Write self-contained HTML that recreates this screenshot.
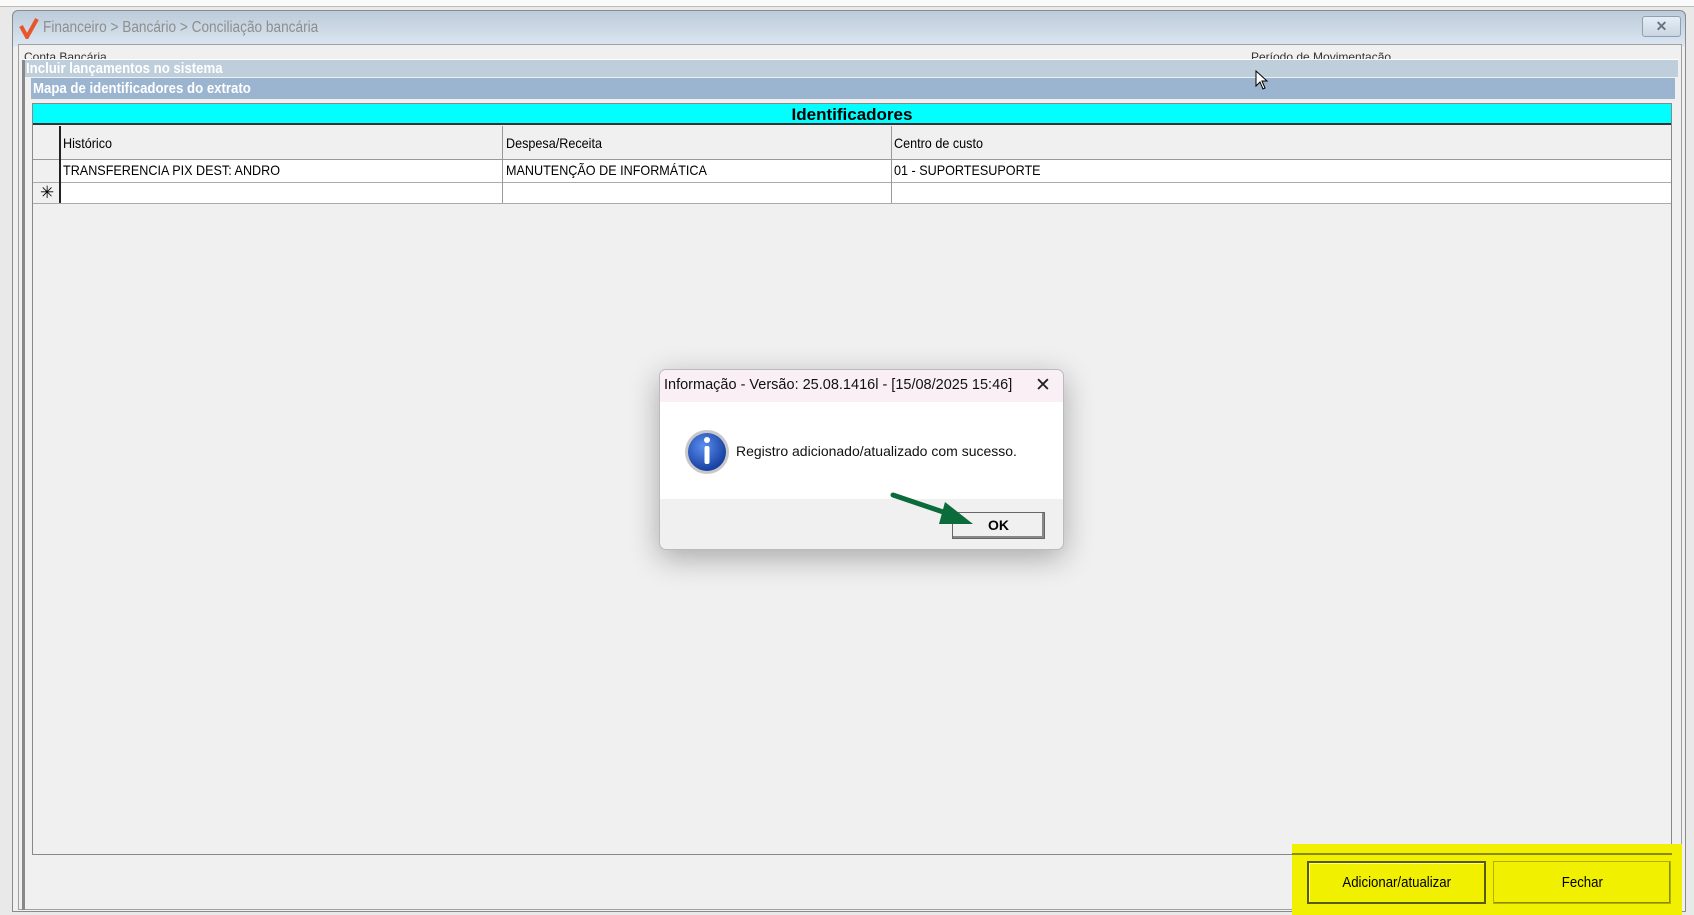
<!DOCTYPE html>
<html><head><meta charset="utf-8"><style>
*{margin:0;padding:0;box-sizing:border-box}
body{width:1694px;height:915px;background:#f0f0f0;position:relative;overflow:hidden;font-family:"Liberation Sans",sans-serif}
.a{position:absolute}
.cell{position:absolute;font-size:14px;color:#000;white-space:nowrap;transform:scaleX(.9);transform-origin:left center}
.bh{transform:scaleX(.88);transform-origin:left center;white-space:nowrap}
</style></head><body>
<div class="a" style="left:0;top:0;width:1694px;height:7px;background:#fafafa;border-bottom:1px solid #bbb"></div>
<div class="a" style="left:0;top:7px;width:1694px;height:908px;background:#e9e9e9"></div>
<div class="a" style="left:12px;top:10px;width:1674px;height:902px;background:linear-gradient(#bccbd9,#dbe6f1 35px,#f0f0f0 36px);border:1px solid #8a8a8a;border-radius:6px 6px 0 0"></div>
<svg class="a" style="left:18px;top:17px" width="22" height="22" viewBox="0 0 22 22"><path d="M3 9 L9 20 L19 2" fill="none" stroke="#e8552a" stroke-width="4"/></svg>
<div class="a" style="left:43px;top:19px;font-size:15.5px;color:#8e8e8e" class="bh"><span class="bh" style="display:inline-block">Financeiro &gt; Bancário &gt; Conciliação bancária</span></div>
<div class="a" style="left:1642px;top:16px;width:39px;height:21px;border:1px solid #8da0b4;border-radius:3px;background:linear-gradient(#e6edf5,#c9d6e3);text-align:center;font-size:14px;line-height:19px;color:#6a7480;font-weight:bold">✕</div>
<div class="a" style="left:18px;top:44px;width:1664px;height:866px;border:1px solid #a0a0a0;background:#f0f0f0"></div>
<div class="a" style="left:24px;top:50px;font-size:12px;color:#333">Conta Bancária</div>
<div class="a" style="left:1251px;top:50px;font-size:12px;color:#333">Período de Movimentação</div>
<div class="a" style="left:24px;top:59px;width:1654px;height:18px;background:#bfcedb;border-top:1px solid #fff"></div>
<div class="a bh" style="left:26px;top:60px;font-size:15px;font-weight:bold;color:#fff">Incluir lançamentos no sistema</div>
<div class="a" style="left:22px;top:60px;width:3px;height:850px;background:#888"></div>
<div class="a" style="left:31px;top:78px;width:1644px;height:21px;background:#9bb4cf"></div>
<div class="a bh" style="left:33px;top:80px;font-size:15px;font-weight:bold;color:#fff">Mapa de identificadores do extrato</div>
<div class="a" style="left:32px;top:103px;width:1640px;height:752px;border:1px solid #888;background:#f0f0f0"></div>
<div class="a" style="left:33px;top:104px;width:1638px;height:21px;background:#00ffff;border-bottom:2px solid #333;text-align:center;font-weight:bold;font-size:17px;line-height:21px">Identificadores</div>
<div class="a" style="left:33px;top:126px;width:1638px;height:34px;background:#f0f0f0;border-bottom:1px solid #999"></div>
<div class="a" style="left:60px;top:160px;width:1611px;height:43px;background:#fff"></div>
<div class="a" style="left:33px;top:182px;width:1638px;height:1px;background:#aaa"></div>
<div class="a" style="left:33px;top:203px;width:1638px;height:1px;background:#aaa"></div>
<div class="a" style="left:59px;top:126px;width:2px;height:77px;background:#222"></div>
<div class="a" style="left:502px;top:126px;width:1px;height:77px;background:#999"></div>
<div class="a" style="left:891px;top:126px;width:1px;height:77px;background:#999"></div>
<div class="cell" style="left:63px;top:135px">Histórico</div>
<div class="cell" style="left:506px;top:135px">Despesa/Receita</div>
<div class="cell" style="left:894px;top:135px">Centro de custo</div>
<div class="cell" style="left:63px;top:162px">TRANSFERENCIA PIX DEST: ANDRO</div>
<div class="cell" style="left:506px;top:162px">MANUTENÇÃO DE INFORMÁTICA</div>
<div class="cell" style="left:894px;top:162px">01 - SUPORTESUPORTE</div>
<div class="a" style="left:40px;top:183px;font-size:17px">✳</div>
<svg class="a" style="left:1255px;top:70px" width="14" height="21" viewBox="0 0 14 21"><path d="M1 1 L1 16 L5 12 L8 19 L10 18 L7 11 L12 11 Z" fill="#fff" stroke="#000" stroke-width="1"/></svg>
<div class="a" style="left:1292px;top:844px;width:390px;height:71px;background:#f0f000"></div>
<div class="a" style="left:1292px;top:853px;width:380px;height:2px;background:#8a8a00"></div>
<div class="a" style="left:1307px;top:861px;width:179px;height:43px;border:2px solid #5a5a00;box-shadow:inset 1px 1px 0 #ffff80;text-align:center;line-height:39px;font-size:15px"><span class="bh" style="display:inline-block;transform-origin:center">Adicionar/atualizar</span></div>
<div class="a" style="left:1493px;top:861px;width:178px;height:43px;border:1px solid #b0b000;box-shadow:inset -1px -1px 0 #8a8a00;text-align:center;line-height:41px;font-size:15px"><span class="bh" style="display:inline-block;transform-origin:center">Fechar</span></div>
<div class="a" style="left:659px;top:369px;width:405px;height:181px;background:#f0f0f0;border:1px solid #bbb;border-radius:7px;box-shadow:0 8px 30px rgba(0,0,0,.3);overflow:hidden">
 <div style="height:32px;background:#f9eff4;font-size:14.5px;padding:7px 0 0 4px;color:#111;font-family:'Liberation Sans',sans-serif;white-space:nowrap">Informação - Versão: 25.08.1416l - [15/08/2025 15:46]</div>
 <div class="a" style="left:375px;top:4px;font-size:19px;color:#222;background:#f9eff4">✕</div>
 <div style="height:97px;background:#fff"></div>
</div>
<svg class="a" style="left:684px;top:429px" width="46" height="46" viewBox="0 0 46 46"><defs><radialGradient id="g" cx=".4" cy=".35" r=".7"><stop offset="0" stop-color="#5a8ef0"/><stop offset="1" stop-color="#123a9a"/></radialGradient></defs><circle cx="23" cy="23" r="22" fill="#c8c8c8"/><circle cx="23" cy="23" r="19" fill="url(#g)"/><circle cx="23" cy="11" r="3" fill="#fff"/><rect x="20.5" y="17" width="5" height="18" rx="2" fill="#fff"/></svg>
<div class="a" style="left:736px;top:443px;font-size:14px;color:#111;font-family:'Liberation Sans',sans-serif">Registro adicionado/atualizado com sucesso.</div>
<div class="a" style="left:952px;top:512px;width:93px;height:27px;border:1px solid #666;box-shadow:inset -2px -2px 0 #888;background:#f0f0f0;text-align:center;line-height:25px;font-size:14px;font-weight:bold">OK</div>
<svg class="a" style="left:885px;top:488px" width="100" height="40" viewBox="0 0 100 40"><path d="M8 7 L70 28" stroke="#0c6b3a" stroke-width="5" stroke-linecap="round"/><path d="M60 14 L88 36 L54 36 Z" fill="#0c6b3a"/></svg>
</body></html>
